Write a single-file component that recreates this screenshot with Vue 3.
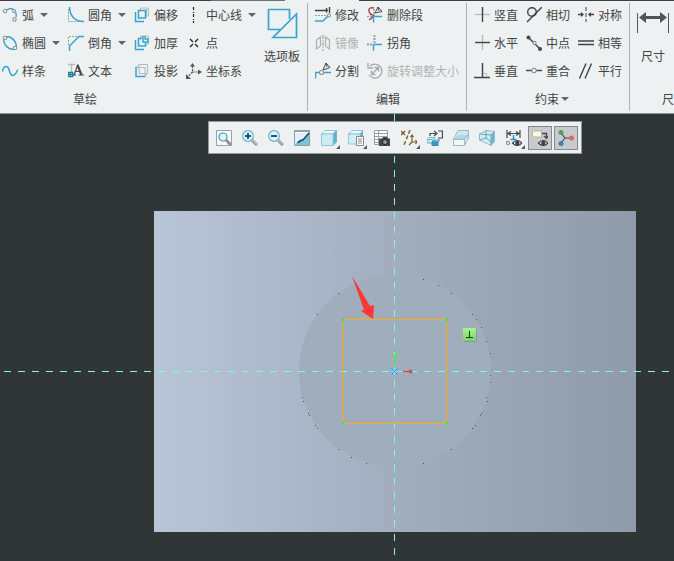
<script setup>
const blue = 'fill="none" stroke="#35a5d0" stroke-width="1.5"'
const dark = 'fill="none" stroke="#3f4345" stroke-width="1.4"'
const pale = 'fill="none" stroke="#b4b8b9"'
const dots = 'fill="none" stroke="#9b9fa0" stroke-dasharray="2 1"'
const knob = 'fill="#f4f6f7" stroke="#8b8f90" stroke-width="1.1"'
const lens = 'fill="#e4f4fa" stroke="#3d9bbd" stroke-width="1.2"'
const eye = '<path d="M6.5 13Q11 8 16 13Q11 18 6.5 13z" fill="#fff" stroke="#3d4144" stroke-width="1.2"/><circle cx="11.3" cy="13" r="2.2" fill="#3d4144"/>'
const magnifier = '<path d="M10 10L15 15" stroke="#8b9194" stroke-width="3"/><path d="M10.500 10L15 14.500" stroke="#e4e7e8"/><circle cx="6" cy="6" r="5.3" fill="#e4f4fa" stroke="#6eb0c8" stroke-width="1.2"/>'

const icons = {
  arc: `<path d="M5 3Q9 0 12 3T14 10" ${blue}/><circle cx="3" cy="4" r="1.7" ${knob}/><circle cx="12" cy="4" r="1.5" ${knob}/><circle cx="12.5" cy="12.5" r="1.7" ${knob}/>`,
  ellipse: `<ellipse cx="8" cy="8" rx="7.5" ry="4.8" transform="rotate(45 8 8)" ${blue}/><circle cx="3" cy="3" r="1.7" ${knob}/><circle cx="13" cy="13" r="1.7" ${knob}/>`,
  spline: `<path d="M.5 8C2 2 6 2 7.5 8S13 14 15.5 7" ${blue} stroke-linecap="round"/>`,
  fillet: `<path d="M.5 2V14.5H12" ${dots}/><path d="M1.5 0C2 9 7 14.5 16 14.5" ${blue}/>`,
  chamfer: `<path d="M.5 10V1.5H11" ${dots}/><path d="M1.5 16V11L11 1.5H16" ${blue}/>`,
  text: `<path d="M0 1.5H7M3.5 1.5V9" stroke-width="1.3" ${pale}/><path d="M6 12L10 1.5" fill="none" stroke="#44484a" stroke-width="1.2"/><path d="M7.5 8.5H12M4.5 12H8M10.500 12H16" fill="none" stroke="#44484a"/><path d="M9.500 2L13.500 12" fill="none" stroke="#44484a" stroke-width="2.2"/><path d="M.7 9.500H4.700V13.500H.7z" fill="#fff" stroke="#167da6" stroke-width="1.3"/><path d="M1 11.500H4.500M2.700 10V13" stroke="#167da6"/>`,
  offset: `<path d="M6.5 3V1H14.5V9H12M12.500 1V9" ${pale}/><path d="M4.500 3.500H11.500V11H4.500z" ${blue}/><path d="M1.500 5V14.500H10" ${blue}/>`,
  thicken: `<path d="M6.500 3V1H14.500V9H12" ${pale}/><path d="M9 1V7H14V4H11V1M8 3.500H4.500V11H11.500V8" ${blue}/><path d="M1.500 5V14.500H10" ${blue}/>`,
  project: `<path d="M2.500 4.500L5 1.500H13.500V10.500L11 13M5 1.500V10.500H13.500M2.500 4.500H11V13" ${pale}/><path d="M2 4V13.500H11.500" ${blue}/>`,
  centerline: `<path d="M7.500 0V16" stroke="#222" stroke-width="1.2" stroke-dasharray="3 2 1 1"/>`,
  point: `<path d="M4 4L7 7M9 9L12 12M12 4L9 7M7 9L4 12" stroke="#222" stroke-width="1.3"/>`,
  csys: `<path d="M6.5 3V9H13M6.5 9L2 13.5" fill="none" stroke="#555" stroke-width="1.2" stroke-dasharray="2 1"/><path d="M4 3.5L6.500 0 9 3.500zM12 6.500L16 9 12 11.500zM0 11V16H5z" fill="#555"/>`,
  palette: `<path d="M14 21.500H2.500V1.500H23.500V11M30.500 6V29.500H7z" fill="none" stroke="#35a5d0" stroke-width="1.7"/>`,
  modify: `<path d="M0 3.500H13M14.500 0V6M11.500 1V5.500" ${dark}/><path d="M0 8.500H11" ${dots}/><path d="M0 14H8L13 9" ${blue}/><circle cx="14" cy="8.500" r="1.500" ${knob}/>`,
  mirror: `<path d="M8 0V16" fill="none" stroke="#999" stroke-dasharray="4 1 1 1"/><path d="M1.500 5L5.500 2V11L1.500 14zM14.500 5L10.500 2V11L14.500 14z" fill="none" stroke="#b0b4b5" stroke-width="1.3"/>`,
  divide: `<path d="M.5 15.500V9.500H16" ${blue}/><circle cx="6.500" cy="9.500" r="2" ${knob}/><path d="M8 7L11 0L15 4.500zM11 0L12 4" fill="#f4f6f7" stroke="#44484a"/>`,
  trim: `<path d="M7 1Q1 0 2 4T6 8T2 13" fill="none" stroke="#ad4447" stroke-width="1.4"/><path d="M0 9.500H6M7 2V8" stroke-width="1.500" ${dots}/><path d="M6.500 15.500V9.500H15" ${blue}/><path d="M8 6L11 0L15 4.500zM11 0L12 4" fill="#f4f6f7" stroke="#44484a"/>`,
  corner: `<path d="M0 9.500H6M7.500 0V8" stroke-width="2" ${dots}/><path d="M6.500 15.500V9.500H15" ${blue}/>`,
  rotate: `<path d="M3 3A7 7 0 1 1 2 12" fill="none" stroke="#a6aaab" stroke-width="1.3"/><path d="M1 0V5H6M5 11L11 5M4.500 7.500V11.500H8.500M7.500 4.500H11.500V8.500" fill="none" stroke="#a6aaab" stroke-width="1.3"/>`,
  vertical: `<path d="M1 7.500H16" stroke-width="1.3" ${pale}/><path d="M8.500 0V15" ${dark}/>`,
  horizontal: `<path d="M8.500 0V15" stroke-width="1.3" ${pale}/><path d="M1 7.500H16" ${dark}/>`,
  perp: `<path d="M8.500 0V14.500M0 14.500H16" ${dark}/><path d="M9 10.500H12.500V14" ${pale}/>`,
  tangent: `<circle cx="6" cy="5" r="4.300" ${dark}/><path d="M1 15L16 0" ${dark}/>`,
  midpoint: `<path d="M2.500 2.500L14 14" ${dark}/><circle cx="2.500" cy="2.500" r="2" fill="#44484a"/><circle cx="14" cy="14" r="2" fill="#44484a"/><circle cx="8.500" cy="8" r="1.600" ${knob}/>`,
  coincident: `<path d="M0 7.500H16" ${dark}/><circle cx="8" cy="7.500" r="2.200" ${knob}/>`,
  symmetric: `<path d="M0 7.500H5M11 7.500H16" ${dark}/><path d="M8 0V15" stroke="#3f4345" stroke-dasharray="4 2"/><path d="M3 5L6 7.500L3 10zM13 5L10 7.500L13 10z" fill="#3f4345"/>`,
  equal: `<path d="M0 6H16M0 9.500H16" ${dark}/>`,
  parallel: `<path d="M1.500 15.500L8 .5M7 15.500L13.500 .5" ${dark}/>`,
  dimension: `<path d="M.5 5V25M31.500 5V25" stroke="#555"/><path d="M6 9.500H26" stroke="#505456" stroke-width="3"/><path d="M2 9.500L9 4V15zM30 9.500L23 4V15z" fill="#505456"/>`,
  refit: `<path d="M.5 .5H15.500V15.500H.5z" fill="#f8fafa" stroke="#9aa1a3"/><path d="M10 10L15 15" stroke="#8b9194" stroke-width="3"/><circle cx="7" cy="7" r="4" ${lens}/>`,
  zoomin: `${magnifier}<path d="M3 6H9M6 3V9" stroke="#085f88" stroke-width="2"/>`,
  zoomout: `${magnifier}<path d="M3 6H9" stroke="#085f88" stroke-width="2"/>`,
  repaint: `<path d="M.5 .5H15.500V15.500H.5z" fill="#fdfefe" stroke="#8f9da2"/><path d="M1 15Q2 11 7 10L15 2V15z" fill="#7fc4dc"/><path d="M1 3Q8 3 14 3L9 9Q4 9 1 14z" fill="#dff2f8"/><path d="M0 1H16" stroke="#9aa1a3" stroke-width="2"/><path d="M4 13Q6 10 9 10L15 3" fill="none" stroke="#164c65" stroke-width="1.5"/>`,
  cube: `<path d="M.5 4L4 .5H15.500L12 4z" fill="#eef8fb" stroke="#8ec6da"/><path d="M12 4L15.500 .5V12L12 15.500z" fill="#62afca" stroke="#70b5cd"/><path d="M.5 4H12V15.500H.5z" fill="#cdebf4" stroke="#8fc8da"/>`,
  saved: `<path d="M.5 4L4 .5H15L12 4z" fill="#eef8fb" stroke="#8ec6da"/><path d="M12 4L15 .5V8H12z" fill="#62afca"/><path d="M.5 4H12V14H.5z" fill="#d5eef5" stroke="#8fc8da"/><path d="M8.500 6.500H15.500V15.500H8.500z" fill="#fff" stroke="#888"/><path d="M10 9H14M10 11H14M10 13H14" stroke="#8a8a8a"/>`,
  camera: `<path d="M.5 .5H13.500V14.500H.5z" fill="#fff" stroke="#9b9fa1"/><path d="M.5 3.500H13M.5 6.500H13M.5 9.500H13M.5 12.500H13M4.500 1V15" stroke="#9b9fa1"/><path d="M5 8.500H8L9 7H13L14 8.500H16V16H5z" fill="#44484a"/><circle cx="11" cy="12" r="2.500" fill="#999" stroke="#1f2122"/>`,
  datum: `<path d="M0 1L4 5M4 1L0 5" stroke="#7c5c20" stroke-width="1.3"/><path d="M9 0L3 15" stroke="#7c5c20" stroke-width="1.4" stroke-dasharray="4 2"/><path d="M11 5V12H16M11 12L8 15M9.500 7L11 5L12.500 7M14.500 10L16 12L14.500 14" fill="none" stroke="#7c5c20" stroke-width="1.2"/>`,
  display: `<path d="M3 6V3.500H9M7 1L10 3.500L7 6M11 1H15.500V8H11" fill="none" stroke="#44484a" stroke-width="1.2"/><path d="M0 9.500L2 7.500H8L6 9.500z" fill="#eef8fb" stroke="#6cb2ca"/><path d="M0 9.500H6V13H0z" fill="#c8eaf4" stroke="#6cb2ca"/><path d="M5 12L7 10H13L11 12z" fill="#b8dfeb" stroke="#4aa2c0"/><path d="M5 12H11V15.500H5z" fill="#3f9fc2" stroke="#278caf"/>`,
  section: `<path d="M.5 9.500L5 5H15.500L11.500 9.500z" fill="#94d3e6"/><path d="M5 .5H15.500V8L11.500 15.500H.5V9L5 .5z" fill="#b8dfeb" fill-opacity=".6" stroke="#9cb9c0"/><path d="M.5 9.500H11.500V15.500H.5z" fill="#f2f8f9" stroke="#9cb9c0"/><path d="M11.500 9L15.500 4" stroke="#81b8c9"/>`,
  perspective: `<path d="M.5 4L7 .5L15.500 1.500V12L12 15.500L.5 10z" fill="#d2ebf3" stroke="#8fbccb"/><path d="M.5 4L12 5L15.500 1.500M12 5V15.500M.5 10L7 8V.5M7 8L12 12" fill="none" stroke="#6aa4b8"/><path d="M12 5L15 2V12L12 15z" fill="#72b4cb"/>`,
  dimshow: `<path d="M1 0V8M14 0V8M2 3.500H13M5 1.500L2 3.500L5 5.500M10 1.500L13 3.500L10 5.500" fill="none" stroke="#44484a" stroke-width="1.2"/><path d="M7.500 5V9.500M4.500 9.500H10.500" stroke="#2196c4" stroke-width="1.5"/><circle cx="2" cy="13" r="1.600" ${knob}/>${eye}`,
  notes: `<path d="M.5 1H9.500V7H.5z" fill="#fff6df" stroke="#b9b3a3"/><path d="M10 3.500H14.500V7M12 6L14.500 8.500L16 6" fill="none" stroke="#44484a" stroke-width="1.3"/>${eye}`,
  spin: `<path d="M3 3L7 8H13M7 8L3 13" fill="none" stroke="#44484a" stroke-width="1.2"/><circle cx="3" cy="2.500" r="2.500" fill="#5b9a5a"/><circle cx="13.500" cy="8" r="2.500" fill="#dd6660"/><circle cx="3" cy="13.500" r="2.500" fill="#3984b3"/>`,
}

const sketch = [
  [{ i: 'arc', t: '弧', menu: true }, { i: 'ellipse', t: '椭圆', menu: true }, { i: 'spline', t: '样条' }],
  [{ i: 'fillet', t: '圆角', menu: true }, { i: 'chamfer', t: '倒角', menu: true }, { i: 'text', t: '文本' }],
  [{ i: 'offset', t: '偏移' }, { i: 'thicken', t: '加厚' }, { i: 'project', t: '投影' }],
  [{ i: 'centerline', t: '中心线', menu: true }, { i: 'point', t: '点' }, { i: 'csys', t: '坐标系' }],
]
const edit = [
  [{ i: 'modify', t: '修改' }, { i: 'mirror', t: '镜像', off: true }, { i: 'divide', t: '分割' }],
  [{ i: 'trim', t: '删除段' }, { i: 'corner', t: '拐角' }, { i: 'rotate', t: '旋转调整大小', off: true }],
]
const constrain = [
  [{ i: 'vertical', t: '竖直' }, { i: 'horizontal', t: '水平' }, { i: 'perp', t: '垂直' }],
  [{ i: 'tangent', t: '相切' }, { i: 'midpoint', t: '中点' }, { i: 'coincident', t: '重合' }],
  [{ i: 'symmetric', t: '对称' }, { i: 'equal', t: '相等' }, { i: 'parallel', t: '平行' }],
]
const groups = [
  { key: 'sketch', label: '草绘', cols: sketch, big: { i: 'palette', t: '选项板' } },
  { key: 'edit', label: '编辑', cols: edit },
  { key: 'constrain', label: '约束', cols: constrain, menu: true },
  { key: 'dimension', label: '尺寸', cols: [], big: { i: 'dimension', t: '尺寸' } },
]

const tools = [
  { i: 'refit', t: '重新调整' },
  { i: 'zoomin', t: '放大' },
  { i: 'zoomout', t: '缩小' },
  { i: 'repaint', t: '重画' },
  { i: 'cube', t: '显示样式', menu: true },
  { i: 'saved', t: '已保存方向', menu: true },
  { i: 'camera', t: '视图管理器' },
  { i: 'datum', t: '基准显示', menu: true },
  { i: 'display', t: '草绘视图' },
  { i: 'section', t: '修剪模型' },
  { i: 'perspective', t: '透视图' },
  { i: 'dimshow', t: '草绘器显示', menu: true },
  { i: 'notes', t: '注释显示', on: true },
  { i: 'spin', t: '旋转中心', on: true },
]

const edgeDots = [
  [423, 279], [438, 285], [451, 293], [338, 293], [472, 314], [476, 319], [317, 314],
  [481, 327], [486, 341], [490, 353], [490, 375], [490, 382], [486, 397], [487, 401],
  [303, 401], [302, 397], [308, 413], [309, 415], [315, 425], [317, 428], [481, 413],
  [480, 415], [475, 425], [472, 428], [451, 449], [338, 449], [351, 457], [366, 463], [423, 463],
]

// Points along both diagonals of the sketched square, leaving its centre free.
const diagonalDots = []
for (let d = 9; d <= 49; d += 4) {
  diagonalDots.push([394 - d, 371 - d], [394 + d, 371 - d], [394 - d, 371 + d], [394 + d, 371 + d])
}
</script>

<template>
  <main class="app">
    <header class="ribbon">
      <section v-for="g in groups" :key="g.key" class="group" :class="g.key">
        <div class="tools">
          <div v-for="(col, c) in g.cols" :key="c" class="col">
            <button v-for="b in col" :key="b.t" type="button" class="cmd" :disabled="b.off">
              <svg class="icon" viewBox="0 0 16 16" aria-hidden="true" v-html="icons[b.i]"></svg>
              <span>{{ b.t }}</span>
              <i v-if="b.menu" class="caret"></i>
            </button>
          </div>
          <button v-if="g.big" type="button" class="big">
            <svg class="bigicon" viewBox="0 0 32 32" aria-hidden="true" v-html="icons[g.big.i]"></svg>
            <span>{{ g.big.t }}</span>
          </button>
        </div>
        <button v-if="g.menu" type="button" class="label">{{ g.label }}<i class="caret"></i></button>
        <div v-else class="label">{{ g.label }}</div>
      </section>
    </header>

    <section class="canvas">
      <svg class="scene" viewBox="0 114 674 447" role="img" aria-label="草绘">
        <defs>
          <linearGradient id="plate" x1="0" x2="1" y1="0" y2="0">
            <stop offset="0" stop-color="#b8c5d7" />
            <stop offset=".5" stop-color="#a2aebe" />
            <stop offset="1" stop-color="#8f9aab" />
          </linearGradient>
          <linearGradient id="tag" x1="0" x2="0" y1="0" y2="1">
            <stop offset="0" stop-color="#a5f58c" />
            <stop offset="1" stop-color="#7ed069" />
          </linearGradient>
        </defs>
        <rect x="154" y="211" width="482" height="321" fill="url(#plate)" />
        <circle cx="395" cy="371" r="96" fill="#a0adbc" />
        <rect v-for="(d, n) in edgeDots" :key="n" :x="d[0]" :y="d[1]" width="1" height="1" fill="#4c5866" />
        <g stroke="#7dfbdc" stroke-dasharray="7 7">
          <path d="M4 371.5H674" />
          <path d="M394.5 114V555" />
        </g>
        <rect v-for="(d, n) in diagonalDots" :key="'d' + n" :x="d[0]" :y="d[1]" width="1" height="1" fill="#6fe04f" />
        <rect x="342.5" y="319.5" width="104" height="104" fill="none" stroke="#ffab08" />
        <g fill="#35dc7c">
          <rect x="342" y="318" width="2" height="3" />
          <rect x="446" y="318" width="2" height="3" />
          <rect x="342" y="422" width="2" height="3" />
          <rect x="446" y="422" width="2" height="3" />
        </g>
        <path d="M394.5 356V367" stroke="#3cf53c" />
        <circle cx="395.5" cy="356" r="1.8" fill="#3cf53c" />
        <path d="M403 371.5H409" stroke="#f62f2f" />
        <circle cx="410.5" cy="371.5" r="2" fill="#cf5058" />
        <path d="M394.5 368V375M391 371.5H398" stroke="#55e8ff" stroke-width="2" />
        <path d="M391.5 368.5L397.5 374.5M397.5 368.5L391.5 374.5" stroke="#8a45ee" stroke-dasharray="2 1" />
        <path d="M352 276L370 306L374 305L373 319L361 311L364 310Z" fill="#fb3837" />
        <rect x="464" y="329" width="13" height="13" fill="#78869a" opacity=".6" />
        <rect x="463" y="328" width="13" height="13" fill="url(#tag)" />
        <path d="M469.5 331V337M466 337.5H473" fill="none" stroke="#173b20" />
      </svg>

      <nav class="viewbar" aria-label="视图">
        <button
          v-for="t in tools" :key="t.i" type="button" class="tool"
          :class="{ on: t.on, drop: t.menu }" :aria-label="t.t" :aria-pressed="!!t.on"
        >
          <svg class="icon" viewBox="0 0 16 16" aria-hidden="true" v-html="icons[t.i]"></svg>
        </button>
      </nav>
    </section>
  </main>
</template>

<style>
body {
  margin: 0;
  background: #303635;
}
</style>

<style scoped>
.app {
  min-height: 100vh;
  box-sizing: border-box;
  overflow: hidden;
  background: #303635;
  font: 12px/16px "Noto Sans CJK SC", "Noto Sans", sans-serif;
  color: #444;
}
button {
  margin: 0;
  padding: 0;
  border: 0;
  background: none;
  font: inherit;
  color: inherit;
}
.ribbon {
  display: flex;
  padding-top: 1px;
  background:
    linear-gradient(90deg, #3a4142 211px, #6b7475 211px 285px, #edf1f2 285px 359px, #3a4142 359px) top / 100% 1px no-repeat,
    #edf1f2;
  border-bottom: 1px solid #8d9897;
  overflow: hidden;
}
.group {
  position: relative;
  flex: none;
  box-sizing: border-box;
  padding-left: 7px;
}
.group::after {
  content: "";
  position: absolute;
  top: 2px;
  right: 0;
  bottom: 2px;
  width: 1px;
  background: #abb0b1;
}
.sketch {
  width: 308px;
  padding-left: 2px;
}
.edit {
  width: 159px;
}
.constrain {
  width: 163px;
}
.dimension {
  width: 90px;
}
.tools {
  display: flex;
  height: 84px;
}
.col {
  flex: none;
  width: 52px;
}
.sketch .col:nth-child(-n + 2) {
  width: 66px;
}
.sketch .col:nth-child(4) {
  width: 76px;
}
.cmd {
  display: flex;
  align-items: center;
  gap: 4px;
  height: 28px;
  white-space: nowrap;
}
.cmd:disabled {
  color: #afb3b4;
}
.icon {
  display: block;
  flex: none;
  width: 16px;
  height: 16px;
}
.caret {
  width: 0;
  border: 4px solid transparent;
  border-top-color: #626668;
  border-bottom: 0;
}
.cmd .caret {
  margin-left: 2px;
}
.big {
  display: flex;
  flex-direction: column;
  align-items: center;
  gap: 8px;
  width: 40px;
  height: 64px;
  padding-top: 7px;
}
.dimension .big {
  width: 32px;
}
.bigicon {
  display: block;
  flex: none;
  width: 32px;
  height: 32px;
}
.label {
  display: flex;
  align-items: center;
  justify-content: center;
  gap: 2px;
  width: 100%;
  height: 28px;
  padding-bottom: 0;
}
.sketch .label {
  width: 166px;
}
.edit .label {
  width: 146px;
}
.dimension .label {
  width: 74px;
}
.canvas {
  position: relative;
}
.scene {
  display: block;
  width: 100%;
}
.viewbar {
  position: absolute;
  top: 7px;
  left: 208px;
  display: flex;
  align-items: center;
  box-sizing: border-box;
  height: 33px;
  padding: 0 2px;
  background: #edf1f2;
  border: 1px solid #909898;
}
.tool {
  position: relative;
  display: flex;
  align-items: center;
  justify-content: center;
  width: 26px;
  height: 24px;
}
.tool.drop {
  width: 27px;
}
.tool.drop::after {
  content: "";
  position: absolute;
  right: 2px;
  bottom: 1px;
  border: 2px solid #54585a;
  border-top-color: transparent;
  border-left-color: transparent;
}
.tool.on {
  width: 24px;
  margin: 0 1px;
  box-sizing: border-box;
  background: #c8cbcd;
  border: 1px solid #858a8c;
}
</style>
